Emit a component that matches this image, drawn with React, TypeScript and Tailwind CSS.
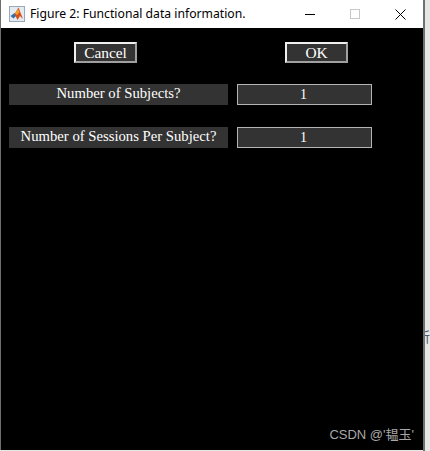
const serif = { fontFamily: '"Liberation Serif", "Times New Roman", serif' };

function MatlabIcon() {
  return (
    <span className="flex h-[16px] w-[16px] items-center justify-center border border-[#9aa8b8] bg-[#e4eaf1]">
      <svg width="14" height="14" viewBox="0 0 14 14">
        <path d="M0.5 9 L4.5 6 L7 8 L3.5 11.5 Z" fill="#2f6fb0" />
        <path d="M4.5 7 L8.5 0.5 L13 12 L10 9 L7.5 13 Z" fill="#d9501a" />
        <path d="M8 2 L9.5 5 L7 8 L5 6.5 Z" fill="#f2a52e" />
      </svg>
    </span>
  );
}

function PushButton({ label, className }: { label: string; className: string }) {
  return (
    <div className={`flex h-[21px] w-[63px] items-center justify-center border-2 border-t-[#f0f0f0] border-l-[#f0f0f0] border-r-[#a0a0a0] border-b-[#a0a0a0] bg-[#333333] text-[15.4px] leading-none text-white ${className}`}>
      {label}
    </div>
  );
}

function FieldRow({ label }: { label: string }) {
  return (
    <div className="flex items-start">
      <div className="ml-[8px] h-[21px] w-[219px] bg-[#333333] text-center text-[14.7px] leading-[18px] text-white whitespace-nowrap">
        {label}
      </div>
      <div className="ml-[9px] flex h-[21px] w-[135px] items-center justify-center border border-[#b4b4b4] bg-[#333333] pr-[2px] text-[14px] text-white">
        1
      </div>
    </div>
  );
}

export default function App() {
  return (
    <div className="flex h-[451px] w-[430px] overflow-hidden bg-[#e6e6e6]">
      <div className="flex h-[450px] w-[423px] flex-col border-l border-[#6e6e6e]">
        <div className="flex h-[28px] items-center bg-white pl-[8px] text-[12.2px] text-black" style={{ fontFamily: '"Noto Sans", sans-serif' }}>
          <MatlabIcon />
          <span className="ml-[5px]">Figure 2: Functional data information.</span>
          <div className="ml-auto flex items-center">
            <span className="h-px w-[10px] bg-black" />
            <span className="ml-[35px] h-[10px] w-[10px] border border-[#c8c8c8]" />
            <span className="ml-[35px] mr-[17px] flex h-[11px] w-[11px] items-center justify-center">
              <svg width="11" height="11" viewBox="0 0 11 11">
                <path d="M0.5 0.5 L10.5 10.5 M10.5 0.5 L0.5 10.5" stroke="#000" strokeWidth="1" />
              </svg>
            </span>
          </div>
        </div>
        <div className="relative flex flex-1 flex-col bg-black" style={serif}>
          <div className="mt-[14px] flex">
            <PushButton label="Cancel" className="ml-[73px]" />
            <PushButton label="OK" className="ml-[148px]" />
          </div>
          <div className="mt-[21px]">
            <FieldRow label="Number of Subjects?" />
          </div>
          <div className="mt-[22px]">
            <FieldRow label="Number of Sessions Per Subject?" />
          </div>
          <div className="absolute bottom-[9px] right-[9px] text-[13px] leading-none text-[#a8a8a8]" style={{ fontFamily: '"Liberation Sans", "Noto Sans CJK SC", sans-serif' }}>
            CSDN @'韫玉'
          </div>
        </div>
      </div>
      <div className="relative h-full w-[7px] overflow-hidden border-l-2 border-[#707070]">
        <span className="absolute left-[-9px] top-[329px] text-[14px] leading-none text-[#4a5a6e]" style={{ fontFamily: '"Noto Sans CJK SC", sans-serif' }}>
          所
        </span>
      </div>
    </div>
  );
}
